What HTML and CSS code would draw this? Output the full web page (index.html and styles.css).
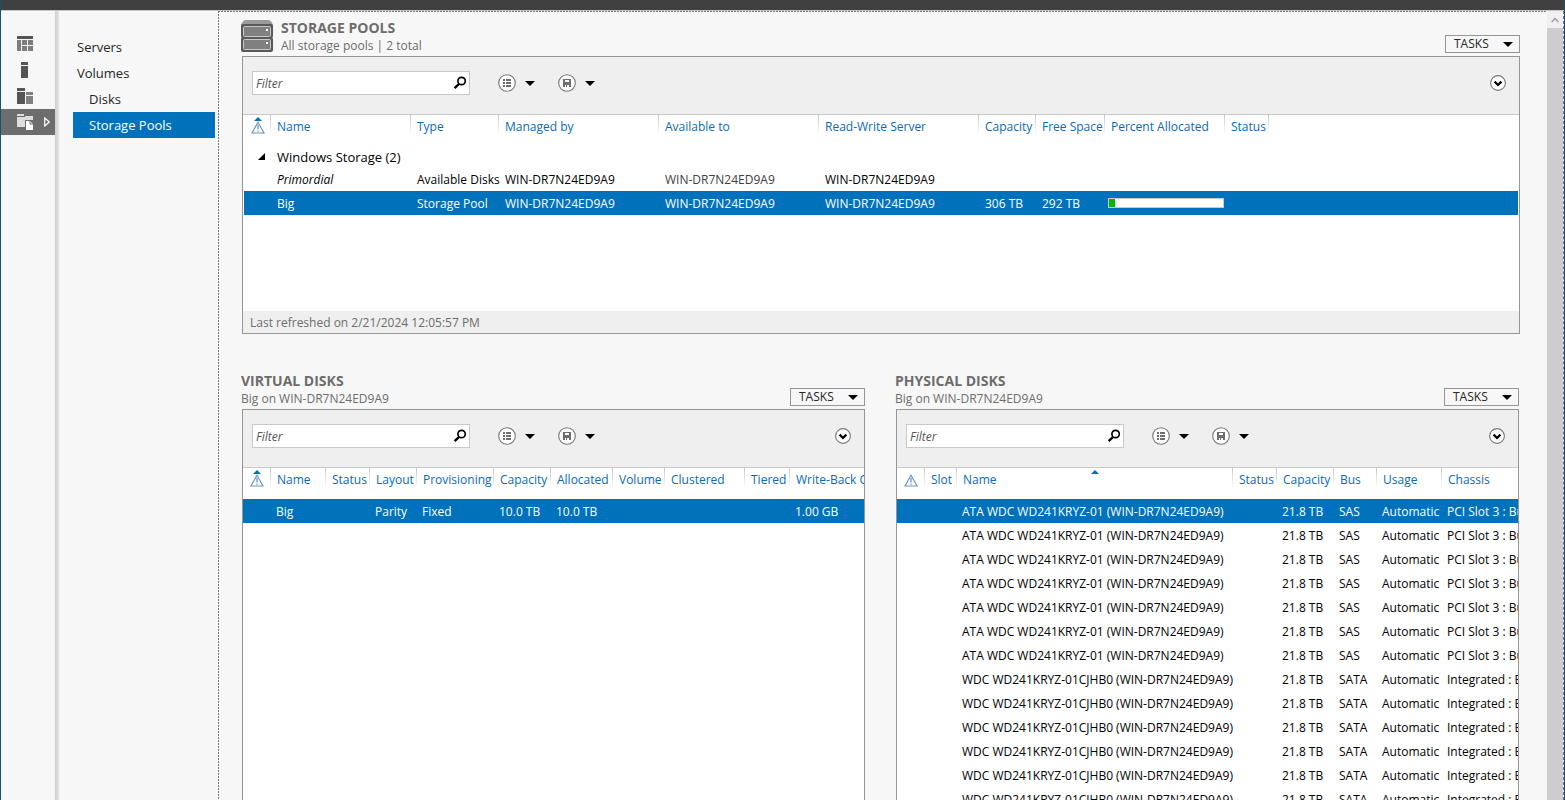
FILE: index.html
```html
<!DOCTYPE html>
<html lang="en">
<head>
    <meta charset="UTF-8">
    <meta name="viewport" content="width=device-width, initial-scale=1.0">
    <title>Server Manager - Storage Pools</title>
    <link rel="stylesheet" href="styles.css">
</head>
<body>
    <!-- Shared icons -->
    <svg class="sprite" aria-hidden="true">
        <symbol id="icon-search" viewBox="0 0 14 14">
            <circle cx="8.6" cy="5" r="3.7" fill="none" stroke="#000" stroke-width="1.7"/>
            <path d="M6 8L1.6 12.2" stroke="#000" stroke-width="2.4"/>
        </symbol>
        <symbol id="icon-list" viewBox="0 0 18 18">
            <circle cx="9" cy="9" r="8.3" fill="#fff" stroke="#777" stroke-width="1.1"/>
            <path d="M5 5h2v2H5zM8 5h5v2H8zM5 8h2v2H5zM8 8h5v2H8zM5 11h2v2H5zM8 11h5v2H8z" fill="#6d6e71"/>
        </symbol>
        <symbol id="icon-save" viewBox="0 0 18 18">
            <circle cx="9" cy="9" r="8.3" fill="#fff" stroke="#777" stroke-width="1.1"/>
            <path d="M5 5h8v8H5z" fill="#6d6e71"/>
            <path d="M7 6h4v2H7zM7 11h1v2H7zM9 11h2v2H9z" fill="#fff"/>
        </symbol>
        <symbol id="icon-expand" viewBox="0 0 16 16">
            <circle cx="8" cy="8" r="7.4" fill="#fff" stroke="#777" stroke-width="1.1"/>
            <path d="M4.6 6.6L8 10l3.4-3.4" fill="none" stroke="#000" stroke-width="2.2"/>
        </symbol>
        <symbol id="icon-down" viewBox="0 0 10 5">
            <path d="M0 0h10L5 5z"/>
        </symbol>
        <symbol id="icon-warning" viewBox="0 0 14 13">
            <path d="M7 1.2L13 12H1z" fill="#fff" stroke="#6d97c9" stroke-width="1.2"/>
            <path d="M7 4v4.500M7 9.500v1.300" stroke="#6d97c9" stroke-width="1.300"/>
        </symbol>
    </svg>

    <div class="titlebar"></div>
    <div class="window">
        <nav class="rail" aria-label="Server Manager">
            <button class="rail-item" aria-label="Dashboard">
                <svg width="16" height="16" viewBox="0 0 16 16">
                    <path d="M0 0h16v3H0z" fill="#555"/>
                    <path d="M0 4h4v11H0zM5 4h5v5H5zM11 4h5v5h-5zM5 10h5v5H5zM11 10h5v5h-5z" fill="#7d7d7d"/>
                </svg>
            </button>
            <button class="rail-item" aria-label="Local Server">
                <svg width="16" height="16" viewBox="0 0 16 16">
                    <path d="M4 0h7v3H4zM4 4h7v12H4z" fill="#555"/>
                </svg>
            </button>
            <button class="rail-item" aria-label="All Servers">
                <svg width="16" height="16" viewBox="0 0 16 16">
                    <path d="M0 0h8v3H0zM0 4h8v12H0z" fill="#555"/>
                    <path d="M9 4h7v3H9zM9 8h7v8H9z" fill="#808080"/>
                </svg>
            </button>
            <button class="rail-item active" aria-label="File and Storage Services">
                <svg width="16" height="16" viewBox="0 0 16 16">
                    <path d="M0 0h7v2H0zM0 3h8V2h8v4H8v7H0z" fill="#ddd"/>
                    <path d="M9 7h4l3 3v6H9z" fill="#fff"/>
                    <path d="M13 7v3h3" fill="none" stroke="#6d6d6d"/>
                </svg>
                <svg width="6" height="10" viewBox="0 0 6 10">
                    <path d="M.7 1v8L5.300 5z" fill="none" stroke="#fff" stroke-width="1.200"/>
                </svg>
            </button>
        </nav>

        <nav class="menu" aria-label="File and Storage Services">
            <a href="#" class="menu-link">Servers</a>
            <a href="#" class="menu-link">Volumes</a>
            <a href="#" class="menu-link sub">Disks</a>
            <a href="#" class="menu-link sub active">Storage Pools</a>
        </nav>

        <main class="content">
            <section>
                <header class="section-header">
                    <svg class="pool-icon" width="32" height="32" viewBox="0 0 32 32">
                        <path d="M5 0h22q3 0 5 5v2H0V5Q2 0 5 0z" fill="#9a9a9a"/>
                        <rect x="0" y="4" width="32" height="14" rx="2" fill="#58595b"/>
                        <rect x="0" y="17" width="32" height="15" rx="2" fill="#58595b"/>
                        <rect x="2.500" y="6.500" width="27" height="10" rx="1" fill="#808080" stroke="#c9c9c9"/>
                        <rect x="2.500" y="19.500" width="27" height="10" rx="1" fill="#808080" stroke="#c9c9c9"/>
                        <path d="M25 9h2v2h-2zM25 22h2v2h-2z" fill="#fff"/>
                    </svg>
                    <div class="section-title">
                        <h2>STORAGE POOLS</h2>
                        <p>All storage pools | 2 total</p>
                    </div>
                    <button class="tasks">TASKS <svg width="10" height="5"><use href="#icon-down"/></svg></button>
                </header>
                <div class="panel pools">
                    <div class="toolbar">
                        <label class="filter">
                            <input type="text" placeholder="Filter" aria-label="Filter storage pools">
                            <svg width="14" height="14"><use href="#icon-search"/></svg>
                        </label>
                        <button class="tool" aria-label="Criteria">
                            <svg width="18" height="18"><use href="#icon-list"/></svg>
                            <svg width="10" height="5"><use href="#icon-down"/></svg>
                        </button>
                        <button class="tool" aria-label="Saved searches">
                            <svg width="18" height="18"><use href="#icon-save"/></svg>
                            <svg width="10" height="5"><use href="#icon-down"/></svg>
                        </button>
                        <button class="tool expand" aria-label="Expand">
                            <svg width="16" height="16"><use href="#icon-expand"/></svg>
                        </button>
                    </div>
                    <div class="table-wrap">
                        <table>
                            <colgroup>
                                <col style="width:27px"><col style="width:140px"><col style="width:88px">
                                <col style="width:160px"><col style="width:160px"><col style="width:160px">
                                <col style="width:57px"><col style="width:69px"><col style="width:120px">
                                <col style="width:44px"><col>
                            </colgroup>
                            <thead>
                                <tr>
                                    <th class="warn sorted"><svg width="14" height="13"><use href="#icon-warning"/></svg></th>
                                    <th>Name</th>
                                    <th>Type</th>
                                    <th>Managed by</th>
                                    <th>Available to</th>
                                    <th>Read-Write Server</th>
                                    <th>Capacity</th>
                                    <th>Free Space</th>
                                    <th>Percent Allocated</th>
                                    <th>Status</th>
                                    <th></th>
                                </tr>
                            </thead>
                            <tbody>
                                <tr class="group">
                                    <td class="arrow"><svg width="7" height="7" viewBox="0 0 7 7"><path d="M7 0v7H0z"/></svg></td>
                                    <td colspan="10">Windows Storage (2)</td>
                                </tr>
                                <tr>
                                    <td></td>
                                    <td><i>Primordial</i></td>
                                    <td>Available Disks</td>
                                    <td>WIN-DR7N24ED9A9</td>
                                    <td class="muted">WIN-DR7N24ED9A9</td>
                                    <td>WIN-DR7N24ED9A9</td>
                                    <td></td>
                                    <td></td>
                                    <td></td>
                                    <td></td>
                                    <td></td>
                                </tr>
                                <tr class="selected">
                                    <td></td>
                                    <td>Big</td>
                                    <td>Storage Pool</td>
                                    <td>WIN-DR7N24ED9A9</td>
                                    <td>WIN-DR7N24ED9A9</td>
                                    <td>WIN-DR7N24ED9A9</td>
                                    <td>306 TB</td>
                                    <td>292 TB</td>
                                    <td class="bar-cell"><div class="bar"><div class="bar-fill" style="width:5%"></div></div></td>
                                    <td></td>
                                    <td></td>
                                </tr>
                            </tbody>
                        </table>
                    </div>
                    <footer class="panel-footer">Last refreshed on 2/21/2024 12:05:57 PM</footer>
                </div>
            </section>

            <div class="columns">
                <section>
                    <header class="section-header">
                        <div class="section-title">
                            <h2>VIRTUAL DISKS</h2>
                            <p>Big on WIN-DR7N24ED9A9</p>
                        </div>
                        <button class="tasks">TASKS <svg width="10" height="5"><use href="#icon-down"/></svg></button>
                    </header>
                    <div class="panel disks">
                        <div class="toolbar">
                            <label class="filter">
                                <input type="text" placeholder="Filter" aria-label="Filter virtual disks">
                                <svg width="14" height="14"><use href="#icon-search"/></svg>
                            </label>
                            <button class="tool" aria-label="Criteria">
                                <svg width="18" height="18"><use href="#icon-list"/></svg>
                                <svg width="10" height="5"><use href="#icon-down"/></svg>
                            </button>
                            <button class="tool" aria-label="Saved searches">
                                <svg width="18" height="18"><use href="#icon-save"/></svg>
                                <svg width="10" height="5"><use href="#icon-down"/></svg>
                            </button>
                            <button class="tool expand" aria-label="Expand">
                                <svg width="16" height="16"><use href="#icon-expand"/></svg>
                            </button>
                        </div>
                        <table>
                            <colgroup>
                                <col style="width:28px"><col style="width:55px"><col style="width:44px">
                                <col style="width:47px"><col style="width:77px"><col style="width:57px">
                                <col style="width:62px"><col style="width:52px"><col style="width:80px">
                                <col style="width:45px"><col>
                            </colgroup>
                            <thead>
                                <tr>
                                    <th class="warn sorted"><svg width="14" height="13"><use href="#icon-warning"/></svg></th>
                                    <th>Name</th>
                                    <th>Status</th>
                                    <th>Layout</th>
                                    <th>Provisioning</th>
                                    <th>Capacity</th>
                                    <th>Allocated</th>
                                    <th>Volume</th>
                                    <th>Clustered</th>
                                    <th>Tiered</th>
                                    <th>Write-Back Cache</th>
                                </tr>
                            </thead>
                            <tbody>
                                <tr class="selected">
                                    <td></td>
                                    <td>Big</td>
                                    <td></td>
                                    <td>Parity</td>
                                    <td>Fixed</td>
                                    <td>10.0 TB</td>
                                    <td>10.0 TB</td>
                                    <td></td>
                                    <td></td>
                                    <td></td>
                                    <td>1.00 GB</td>
                                </tr>
                            </tbody>
                        </table>
                    </div>
                </section>

                <section>
                    <header class="section-header">
                        <div class="section-title">
                            <h2>PHYSICAL DISKS</h2>
                            <p>Big on WIN-DR7N24ED9A9</p>
                        </div>
                        <button class="tasks">TASKS <svg width="10" height="5"><use href="#icon-down"/></svg></button>
                    </header>
                    <div class="panel disks">
                        <div class="toolbar">
                            <label class="filter">
                                <input type="text" placeholder="Filter" aria-label="Filter physical disks">
                                <svg width="14" height="14"><use href="#icon-search"/></svg>
                            </label>
                            <button class="tool" aria-label="Criteria">
                                <svg width="18" height="18"><use href="#icon-list"/></svg>
                                <svg width="10" height="5"><use href="#icon-down"/></svg>
                            </button>
                            <button class="tool" aria-label="Saved searches">
                                <svg width="18" height="18"><use href="#icon-save"/></svg>
                                <svg width="10" height="5"><use href="#icon-down"/></svg>
                            </button>
                            <button class="tool expand" aria-label="Expand">
                                <svg width="16" height="16"><use href="#icon-expand"/></svg>
                            </button>
                        </div>
                        <table>
                            <colgroup>
                                <col style="width:28px"><col style="width:32px"><col style="width:276px">
                                <col style="width:44px"><col style="width:57px"><col style="width:43px">
                                <col style="width:65px"><col>
                            </colgroup>
                            <thead>
                                <tr>
                                    <th class="warn"><svg width="14" height="13"><use href="#icon-warning"/></svg></th>
                                    <th>Slot</th>
                                    <th class="sorted">Name</th>
                                    <th>Status</th>
                                    <th>Capacity</th>
                                    <th>Bus</th>
                                    <th>Usage</th>
                                    <th>Chassis</th>
                                </tr>
                            </thead>
                            <tbody id="physicalDisks"></tbody>
                        </table>
                    </div>
                </section>
            </div>
        </main>

        <div class="scrollbar">
            <button class="scroll-up" aria-label="Scroll up">
                <svg width="8" height="6" viewBox="0 0 8 6"><path d="M.7 5L4 1.500 7.300 5" fill="none" stroke="#a0a0a0" stroke-width="1.500"/></svg>
            </button>
            <div class="scroll-thumb"></div>
        </div>
    </div>

    <script>
        const server = 'WIN-DR7N24ED9A9';
        const groups = [
            { count: 7, model: 'ATA WDC WD241KRYZ-01', bus: 'SAS', chassis: 'PCI Slot 3 : Bus 1' },
            { count: 7, model: 'WDC WD241KRYZ-01CJHB0', bus: 'SATA', chassis: 'Integrated : Bus 0' }
        ];
        const tbody = document.getElementById('physicalDisks');

        groups.forEach(group => {
            for (let i = 0; i < group.count; i++) {
                const row = tbody.insertRow();
                const cells = ['', '', `${group.model} (${server})`, '', '21.8 TB', group.bus, 'Automatic', group.chassis];
                cells.forEach(text => {
                    row.insertCell().textContent = text;
                });
            }
        });

        // First disk is selected by default
        tbody.rows[0].classList.add('selected');
    </script>
</body>
</html>
```

FILE: styles.css
```css
* {
    box-sizing: border-box;
}

body {
    display: flex;
    flex-direction: column;
    height: 100vh;
    margin: 0;
    overflow: hidden;
    border-left: 1px solid #1b4f72;
    border-right: 1px solid #1b4f72;
    background: #f7f7f7;
    color: #000;
    font-family: "Open Sans", "Noto Sans", sans-serif;
    font-size: 12px;
    line-height: 18px;
}

h2, p {
    margin: 0;
}

button {
    padding: 0;
    border: none;
    background: none;
    color: inherit;
    font: inherit;
    cursor: pointer;
}

svg {
    display: block;
    flex: none;
}

.sprite {
    position: absolute;
    width: 0;
    height: 0;
}

.titlebar {
    flex: none;
    height: 11px;
    background: #404040;
    border-bottom: 1px solid #c8c8c8;
}

.window {
    display: flex;
    flex: 1;
    min-height: 0;
}

/* Left navigation */
.rail {
    flex: none;
    width: 58px;
    padding: 20px 4px 0 0;
    background: linear-gradient(90deg, #cfcfcf, #e4e4e4) right / 4px 100% no-repeat;
}

.rail-item {
    display: flex;
    align-items: center;
    gap: 11px;
    width: 100%;
    height: 26px;
    padding-left: 16px;
}

.rail-item.active {
    background: #6d6d6d;
}

.menu {
    flex: none;
    width: 159px;
    padding: 23px 3px 0 14px;
}

.menu-link {
    display: block;
    height: 26px;
    padding-left: 4px;
    color: #262626;
    font-size: 13px;
    line-height: 26px;
    text-decoration: none;
}

.menu-link.sub {
    padding-left: 16px;
}

.menu-link.active {
    background: #0072bc;
    color: #fff;
}

/* Main area */
.content {
    flex: 1;
    min-width: 0;
    padding: 8px 27px 0 23px;
    overflow: hidden;
    background:
        repeating-linear-gradient(90deg, #777 0 2px, transparent 2px 3px) top / 100% 1px no-repeat,
        repeating-linear-gradient(#777 0 2px, transparent 2px 3px) left / 1px 100% no-repeat;
}

.section-header {
    display: flex;
    align-items: flex-end;
    height: 37px;
}

.pool-icon {
    align-self: flex-start;
    margin: 1px 8px 0 0;
}

.section-title {
    flex: 1;
    align-self: flex-start;
    color: #6d6d6d;
}

.section-title h2 {
    font-size: 14px;
    font-weight: 700;
    line-height: 18px;
}

.tasks {
    display: flex;
    align-items: center;
    justify-content: space-between;
    width: 75px;
    height: 18px;
    margin-bottom: 3px;
    padding: 0 6px 0 8px;
    border: 1px solid #969696;
    color: #262626;
}

.panel {
    display: flex;
    flex-direction: column;
    margin-left: 1px;
    overflow: hidden;
    border: 1px solid #969696;
    background: #fff;
}

.pools {
    min-height: 278px;
}

.columns {
    display: grid;
    grid-template-columns: 1fr 1fr;
    gap: 30px;
    margin: 38px 1px 0 0;
}

.columns section {
    display: flex;
    flex-direction: column;
    min-width: 0;
}

.disks {
    flex: 1;
}

.toolbar {
    display: flex;
    flex: none;
    align-items: flex-start;
    gap: 23px;
    height: 58px;
    padding: 14px 13px 0 9px;
    border-bottom: 1px solid #c8c8c8;
    background: #efefef;
}

.filter {
    display: flex;
    align-items: center;
    width: 218px;
    height: 24px;
    margin-right: 5px;
    padding: 0 2px 0 3px;
    border: 1px solid #c8c8c8;
    background: #fff;
}

.filter input {
    flex: 1;
    min-width: 0;
    padding: 2px 0 0;
    border: none;
    outline: none;
    background: none;
    font: inherit;
    font-style: italic;
}

.filter input::placeholder {
    color: #555;
    opacity: 1;
}

.tool {
    display: flex;
    align-items: center;
    gap: 9px;
    height: 24px;
}

.expand {
    margin-left: auto;
}

/* Tables */
.table-wrap {
    flex: 1;
    padding: 0 1px;
}

table {
    width: 100%;
    border-collapse: collapse;
    table-layout: fixed;
}

th {
    position: relative;
    height: 31px;
    padding: 3px 0 0 6px;
    background: linear-gradient(#c8c8c8, #fff) right top / 1px 20px no-repeat;
    color: #0a6ab8;
    font-weight: 400;
    text-align: left;
    vertical-align: top;
    white-space: nowrap;
}

th:last-child {
    background: none;
}

.warn {
    padding: 6px 0 0 7px;
}

.sorted::before {
    content: "";
    position: absolute;
    top: 2px;
    left: 50%;
    margin-left: -4px;
    border: 4px solid transparent;
    border-top: none;
    border-bottom-color: #0072bc;
}

td {
    height: 24px;
    padding: 2px 0 0 5px;
    white-space: nowrap;
}

.pools td {
    padding-left: 6px;
}

.pools .arrow {
    padding: 0 0 0 14px;
}

.group td {
    height: 21px;
    padding-top: 0;
    font-size: 13px;
}

.muted {
    color: #404040;
}

.selected {
    background: #0072bc;
    color: #fff;
}

.pools .bar-cell {
    padding: 0 1px 0 3px;
}

.bar {
    height: 10px;
    border: 1px solid #c8c8c8;
    background: #fff;
}

.bar-fill {
    height: 100%;
    background: #00b900;
}

.panel-footer {
    height: 22px;
    padding-left: 7px;
    background: #efefef;
    color: #6d6d6d;
    line-height: 24px;
}

/* Scrollbar */
.scrollbar {
    display: flex;
    flex: none;
    flex-direction: column;
    width: 17px;
    border-right: 1px dashed #777;
}

.scroll-up {
    display: flex;
    align-items: center;
    justify-content: center;
    height: 17px;
    background: #f0f0f0;
}

.scroll-thumb {
    flex: 1;
    background: #cdcdcd;
}
```
